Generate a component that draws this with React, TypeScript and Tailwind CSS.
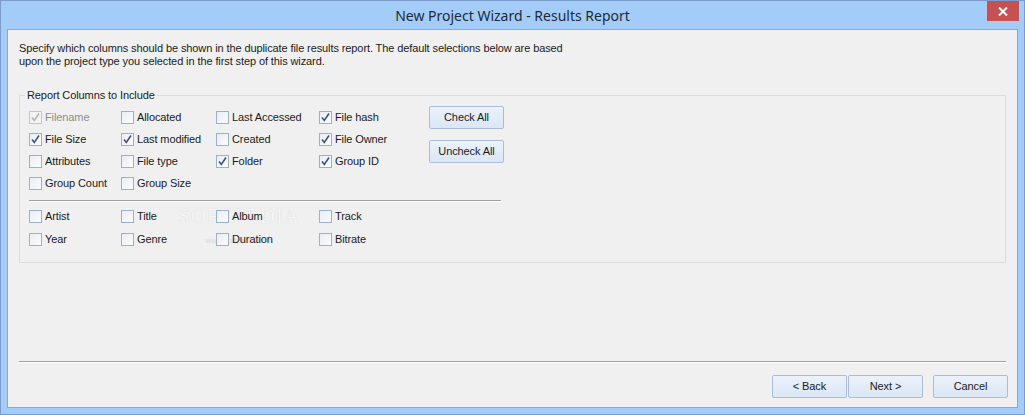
import React, { useState } from 'react';

type Item = { label: string; checked: boolean; disabled?: boolean };

const mainRows: Item[][] = [
    [
        { label: 'Filename', checked: true, disabled: true },
        { label: 'Allocated', checked: false },
        { label: 'Last Accessed', checked: false },
        { label: 'File hash', checked: true },
    ],
    [
        { label: 'File Size', checked: true },
        { label: 'Last modified', checked: true },
        { label: 'Created', checked: false },
        { label: 'File Owner', checked: true },
    ],
    [
        { label: 'Attributes', checked: false },
        { label: 'File type', checked: false },
        { label: 'Folder', checked: true },
        { label: 'Group ID', checked: true },
    ],
    [
        { label: 'Group Count', checked: false },
        { label: 'Group Size', checked: false },
    ],
];

const mediaRows: Item[][] = [
    [
        { label: 'Artist', checked: false },
        { label: 'Title', checked: false },
        { label: 'Album', checked: false },
        { label: 'Track', checked: false },
    ],
    [
        { label: 'Year', checked: false },
        { label: 'Genre', checked: false },
        { label: 'Duration', checked: false },
        { label: 'Bitrate', checked: false },
    ],
];

const Check: React.FC<{ item: Item; onToggle: () => void }> = ({ item, onToggle }) => (
    <label className="flex items-center gap-[3px] cursor-default select-none" onClick={item.disabled ? undefined : onToggle}>
        <span
            className={`w-[13px] h-[13px] border flex items-center justify-center ${
                item.disabled
                    ? 'border-[#c6c6c6] bg-[#f4f4f4]'
                    : 'border-[#9cb0cc] bg-gradient-to-br from-[#e9edf3] to-[#fbfcfd]'
            }`}
        >
            {item.checked && (
                <svg width="11" height="11" viewBox="0 0 11 11">
                    <path
                        d="M2 5.5 L4.3 8.5 L9 1.5"
                        fill="none"
                        stroke={item.disabled ? '#b4b4b4' : '#3f5478'}
                        strokeWidth="1.6"
                    />
                </svg>
            )}
        </span>
        <span className={item.disabled ? 'text-[#8d8d8d]' : 'text-[#1b1b1b]'}>{item.label}</span>
    </label>
);

const Btn: React.FC<{ children: React.ReactNode; className?: string; onClick?: () => void }> = ({ children, className, onClick }) => (
    <button
        onClick={onClick}
        className={`w-[75px] h-[23px] border border-[#acbcd6] rounded-[2px] bg-gradient-to-b from-[#ebf2fb] to-[#dbe7f5] text-[#1b1b1b] leading-none ${className ?? ''}`}
    >
        {children}
    </button>
);

export default function App() {
    const [main, setMain] = useState(mainRows);
    const [media, setMedia] = useState(mediaRows);

    const toggle = (which: 'main' | 'media', r: number, c: number) => {
        const set = which === 'main' ? setMain : setMedia;
        set((rows) =>
            rows.map((row, ri) =>
                row.map((it, ci) => (ri === r && ci === c ? { ...it, checked: !it.checked } : it))
            )
        );
    };

    const setAll = (value: boolean) => {
        setMain((rows) => rows.map((row) => row.map((it) => (it.disabled ? it : { ...it, checked: value }))));
        setMedia((rows) => rows.map((row) => row.map((it) => ({ ...it, checked: value }))));
    };

    return (
        <div
            className="relative w-[1025px] h-[415px] bg-[#a3cdf8] border border-[#7c9ccc] flex flex-col"
            style={{ fontFamily: '"Liberation Sans", Arial, sans-serif' }}
        >
            {/* title bar */}
            <div
                className="h-[28px] flex items-center justify-center text-[14px] text-[#1e2a3a]"
                style={{ fontFamily: '"Noto Sans", "Open Sans", sans-serif' }}
            >
                New Project Wizard - Results Report
            </div>
            <button className="absolute top-0 right-[5px] w-[32px] h-[20px] bg-[#c75050] flex items-center justify-center">
                <svg width="10" height="9" viewBox="0 0 10 9">
                    <path d="M1 0.5 L9 8.5 M9 0.5 L1 8.5" stroke="#fff" strokeWidth="2" />
                </svg>
            </button>

            {/* client area */}
            <div className="relative flex-1 mx-[6px] mb-[6px] border border-[#86a7d6] bg-[#f0f0f0] flex flex-col text-[11px] tracking-[-0.1px] text-[#1b1b1b]">
                <p className="pl-[11px] pt-[12px] leading-[13px]">
                    Specify which columns should be shown in the duplicate file results report. The default selections below are based
                    <br />
                    upon the project type you selected in the first step of this wizard.
                </p>

                {/* group box */}
                <div className="relative mt-[27px] ml-[11px] mr-[11px] h-[168px] border border-[#dcdcdc]">
                    <span className="absolute -top-[8px] left-[5px] px-[2px] bg-[#f0f0f0] leading-[15px]">
                        Report Columns to Include
                    </span>

                    {/* watermark */}
                    <div className="absolute left-[158px] top-[110px] pointer-events-none flex flex-col items-center">
                        <span
                            className="text-[21px] leading-none tracking-[1px] text-[#f5f5f5]"
                            style={{ fontFamily: '"Liberation Serif", serif', textShadow: '0 0 1px #cdcdcd' }}
                        >
                            SOFTPEDIA
                        </span>
                        <span className="text-[8px] text-[#d8d8d8] mt-[8px]">www.softpedia.com</span>
                    </div>

                    <div className="relative flex pl-[9px] pt-[10px]">
                        <div className="w-[400px] flex flex-col">
                            {main.map((row, r) => (
                                <div key={r} className="grid grid-cols-[92px_95px_103px_110px] h-[22px] items-center">
                                    {row.map((it, c) => (
                                        <Check key={it.label} item={it} onToggle={() => toggle('main', r, c)} />
                                    ))}
                                </div>
                            ))}
                            <div className="mt-[6px] w-[472px] border-t border-[#a0a0a0] border-b border-b-white" />
                            <div className="pt-[3px]">
                                {media.map((row, r) => (
                                    <div key={r} className="grid grid-cols-[92px_95px_103px_110px] h-[23px] items-center">
                                        {row.map((it, c) => (
                                            <Check key={it.label} item={it} onToggle={() => toggle('media', r, c)} />
                                        ))}
                                    </div>
                                ))}
                            </div>
                        </div>
                        <div className="flex flex-col gap-[11px]">
                            <Btn className="h-[23px]" onClick={() => setAll(true)}>
                                Check All
                            </Btn>
                            <Btn onClick={() => setAll(false)}>Uncheck All</Btn>
                        </div>
                    </div>
                </div>

                <div className="flex-1" />
                <div className="mx-[11px] border-t border-[#a0a0a0] border-b border-b-white" />
                <div className="flex justify-end items-center pt-[12px] pb-[9px] pr-[9px]">
                    <Btn>&lt; Back</Btn>
                    <Btn className="ml-px">Next &gt;</Btn>
                    <Btn className="ml-[10px]">Cancel</Btn>
                </div>
            </div>
        </div>
    );
}
